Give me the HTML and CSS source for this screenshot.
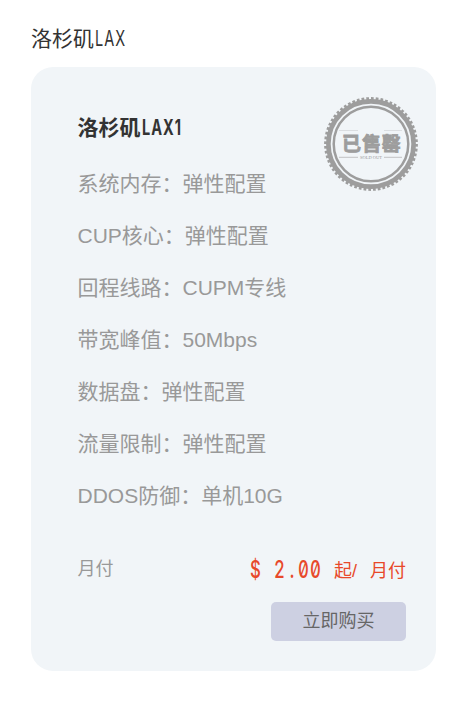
FILE: index.html
```html
<!DOCTYPE html>
<html lang="zh-CN">
<head>
<meta charset="utf-8">
<title>洛杉矶LAX</title>
<link rel="stylesheet" href="styles.css">
</head>
<body>
<h1 class="region">洛杉矶<span class="narrow">LAX</span></h1>
<section class="card">
  <svg class="stamp" viewBox="0 0 96 96" aria-label="已售罄">
    <circle class="teeth" cx="48" cy="48" r="45.2" pathLength="120"/>
    <circle class="outer" cx="48" cy="48" r="42.6"/>
    <circle class="inner" cx="48" cy="48" r="37.3"/>
    <path class="rule faint" d="M16 34.5H35M61 34.5H79"/>
    <path class="rule" d="M16 61.3H35M61 61.3H79"/>
    <text class="sold" x="48.9" y="54.8">已售罄</text>
    <text class="soldout" x="48" y="63" textLength="22">SOLD OUT</text>
  </svg>
  <h2 class="name">洛杉矶<span class="narrow">LAX1</span></h2>
  <ul class="specs">
    <li>系统内存：弹性配置</li>
    <li>CUP核心：弹性配置</li>
    <li>回程线路：CUPM专线</li>
    <li>带宽峰值：50Mbps</li>
    <li>数据盘：弹性配置</li>
    <li>流量限制：弹性配置</li>
    <li>DDOS防御：单机10G</li>
  </ul>
  <div class="billing">
    <span class="cycle">月付</span>
    <div class="price"><span class="currency">$</span><span class="amount">2<span class="point">.</span>00</span><span class="unit">起<span class="slash">/</span>月付</span></div>
  </div>
  <button class="buy">立即购买</button>
</section>
</body>
</html>
```
FILE: styles.css
```css
* { box-sizing: border-box; }
body {
  margin: 0;
  padding: 23px 24px 0 31px;
  background: #fff;
  color: #333;
  font-family: "Liberation Sans", "Noto Sans CJK SC", sans-serif;
}
.region {
  margin: 0;
  height: 44px;
  font-size: 21px;
  font-weight: 400;
  line-height: 31px;
}
.narrow {
  display: inline-block;
  font-family: Inter, sans-serif;
  letter-spacing: 1.5px;
  transform: translateX(1px) scaleX(.69);
  transform-origin: left;
}
.name .narrow { font-weight: 700; }
.card {
  position: relative;
  display: flex;
  flex-direction: column;
  height: 604px;
  padding: 45px 30px 30px 46.5px;
  border-radius: 22px;
  background: #f1f5f8;
}
.stamp {
  position: absolute;
  top: 29px;
  right: 17px;
  width: 96px;
  height: 96px;
}
.stamp circle { fill: none; stroke: #9d9d9d; }
.stamp .teeth { stroke-width: 3.4; stroke-dasharray: 1.15 .85; }
.stamp .outer { stroke-width: 4.6; }
.stamp .inner { stroke-width: 2.5; }
.stamp .rule { stroke: #b5b5b5; stroke-width: .8; }
.stamp .faint { stroke: #d5d8db; }
.sold {
  fill: #9d9d9d;
  stroke: #9d9d9d;
  stroke-width: .8;
  font: 700 19px "Noto Sans CJK SC", sans-serif;
  letter-spacing: .9px;
  text-anchor: middle;
}
.soldout {
  fill: #999;
  font: 4.5px "Liberation Serif", serif;
  text-anchor: middle;
}
.name {
  margin: 0;
  font-size: 21px;
  line-height: 31px;
  height: 31px;
}
.specs {
  margin: 15px 0 0;
  padding: 0;
  list-style: none;
  color: #999;
  font-size: 21px;
}
.specs li { height: 52px; line-height: 52px; white-space: nowrap; }
.billing {
  display: flex;
  justify-content: space-between;
  height: 44px;
  margin-top: 28px;
  line-height: 44px;
}
.cycle { color: #999; font-size: 18px; line-height: 39px; }
.price { display: flex; color: #e8492a; }
.currency, .amount {
  display: block;
  font-family: Inter, sans-serif;
  font-size: 24px;
  font-weight: 500;
  line-height: 40px;
  transform: scaleX(.7);
  transform-origin: left;
}
.currency { width: 24px; }
.amount {
  width: 60px;
  white-space: nowrap;
  letter-spacing: 1.6px;
  font-feature-settings: "tnum", "zero";
}
.point { display: inline-block; width: 17px; text-align: center; letter-spacing: 0; }
.unit { font-size: 18px; line-height: 43px; }
.slash { display: inline-block; width: 18px; }
.buy {
  align-self: flex-end;
  width: 135px;
  height: 39px;
  margin-top: 8px;
  padding: 0 0 5px;
  border: 0;
  border-radius: 5px;
  background: #cdd0e2;
  color: #666;
  font-family: "Noto Sans CJK SC", sans-serif;
  font-size: 18px;
  line-height: 34px;
}
```
